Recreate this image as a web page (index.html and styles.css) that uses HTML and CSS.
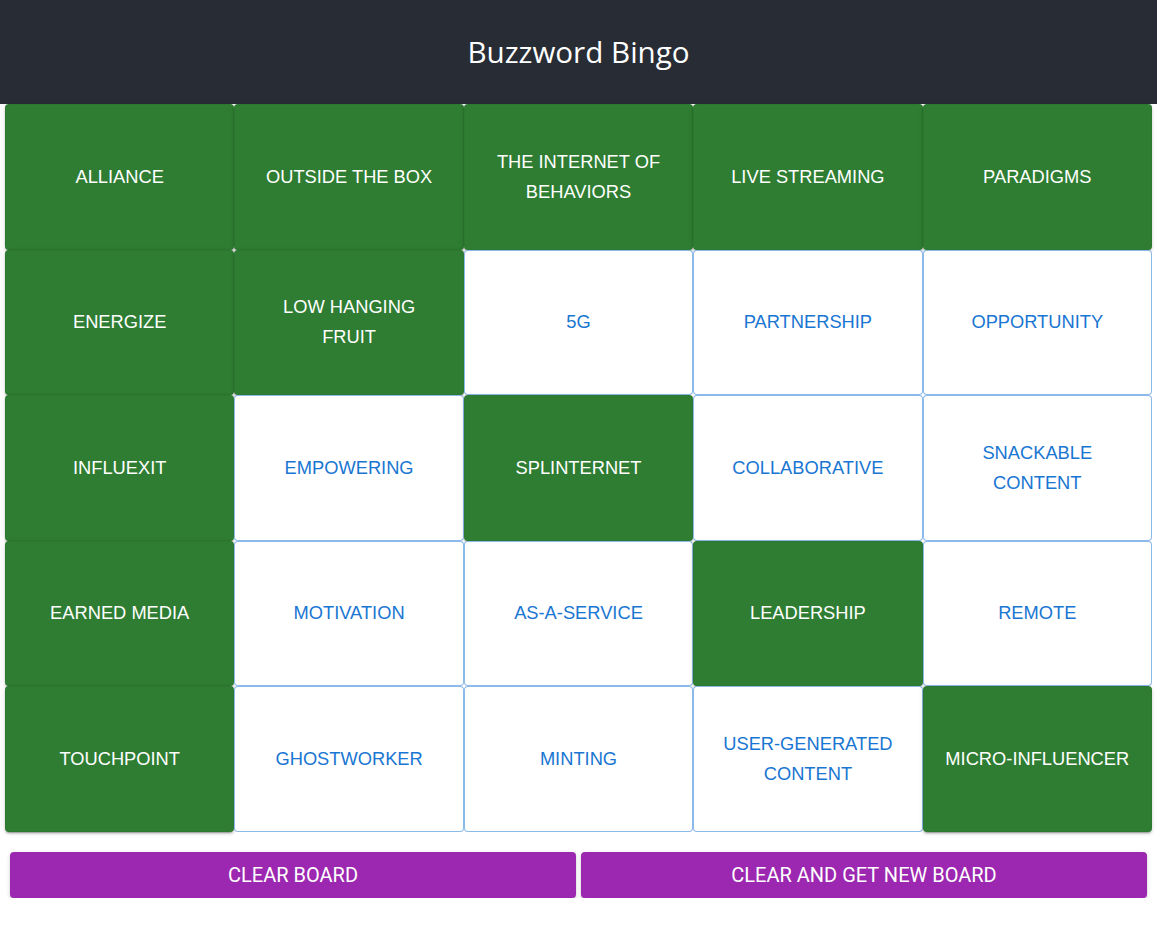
FILE: index.html
```html
<!DOCTYPE html>
<html>
<head>
<meta charset="utf-8">
<link rel="stylesheet" href="styles.css">
</head>
<body>
<header class="app-header"><h1 class="title">Buzzword Bingo</h1></header>
<main class="board">
  <button class="cell on"><span>ALLIANCE</span></button>
  <button class="cell on"><span>OUTSIDE THE BOX</span></button>
  <button class="cell on"><span>THE INTERNET OF BEHAVIORS</span></button>
  <button class="cell on"><span>LIVE STREAMING</span></button>
  <button class="cell on"><span>PARADIGMS</span></button>

  <button class="cell on"><span>ENERGIZE</span></button>
  <button class="cell on"><span>LOW HANGING FRUIT</span></button>
  <button class="cell off"><span>5G</span></button>
  <button class="cell off"><span>PARTNERSHIP</span></button>
  <button class="cell off"><span>OPPORTUNITY</span></button>

  <button class="cell on"><span>INFLUEXIT</span></button>
  <button class="cell off"><span>EMPOWERING</span></button>
  <button class="cell on"><span>SPLINTERNET</span></button>
  <button class="cell off"><span>COLLABORATIVE</span></button>
  <button class="cell off"><span>SNACKABLE CONTENT</span></button>

  <button class="cell on"><span>EARNED MEDIA</span></button>
  <button class="cell off"><span>MOTIVATION</span></button>
  <button class="cell off"><span>AS-A-SERVICE</span></button>
  <button class="cell on"><span>LEADERSHIP</span></button>
  <button class="cell off"><span>REMOTE</span></button>

  <button class="cell on"><span>TOUCHPOINT</span></button>
  <button class="cell off"><span>GHOSTWORKER</span></button>
  <button class="cell off"><span>MINTING</span></button>
  <button class="cell off"><span>USER-GENERATED CONTENT</span></button>
  <button class="cell on"><span>MICRO-INFLUENCER</span></button>
</main>
<div class="actions">
  <button class="action">CLEAR BOARD</button>
  <button class="action">CLEAR AND GET NEW BOARD</button>
</div>
</body>
</html>
```
FILE: styles.css
```css
* { box-sizing: border-box; }
html, body { margin: 0; padding: 0; background: #fff; }
body { font-family: "Liberation Sans", Arial, sans-serif; }

.app-header {
  background: #282c34;
  height: 104px;
  display: flex;
  align-items: center;
  justify-content: center;
}
.title {
  margin: 0;
  color: #fff;
  font-family: "Open Sans", "Noto Sans", sans-serif;
  font-weight: 400;
  font-size: 29.6px;
  padding-bottom: 2px;
}

.board {
  display: grid;
  grid-template-columns: repeat(5, 1fr);
  grid-auto-rows: 145.6px;
  padding: 0 5px;
}
.cell {
  font-family: "Liberation Sans", Arial, sans-serif;
  font-size: 18.3px;
  line-height: 30px;
  text-transform: uppercase;
  border-radius: 4px;
  display: flex;
  align-items: center;
  justify-content: center;
  text-align: center;
  padding: 5.6px 19.5px 6px;
  margin: 0;
  cursor: pointer;
}
.cell span { display: block; }
.cell.on {
  background: #2e7d32;
  color: #fff;
  border: 1px solid rgba(0,0,0,0.04);
  box-shadow: 0 3px 1px -2px rgba(0,0,0,0.2), 0 2px 2px 0 rgba(0,0,0,0.14), 0 1px 5px 0 rgba(0,0,0,0.12);
}
.cell.off {
  background: #fff;
  color: #1976d2;
  border: 1px solid rgba(25,118,210,0.5);
}

.actions {
  display: flex;
  gap: 5px;
  padding: 20px 10px 0;
}
.action {
  flex: 1;
  height: 46px;
  background: #9c27b0;
  color: #fff;
  border: none;
  border-radius: 4px;
  font-family: Roboto, "Liberation Sans", sans-serif;
  font-size: 20px;
  font-weight: 400;
  box-shadow: 0 3px 1px -2px rgba(0,0,0,0.2), 0 2px 2px 0 rgba(0,0,0,0.14), 0 1px 5px 0 rgba(0,0,0,0.12);
  cursor: pointer;
}
```
